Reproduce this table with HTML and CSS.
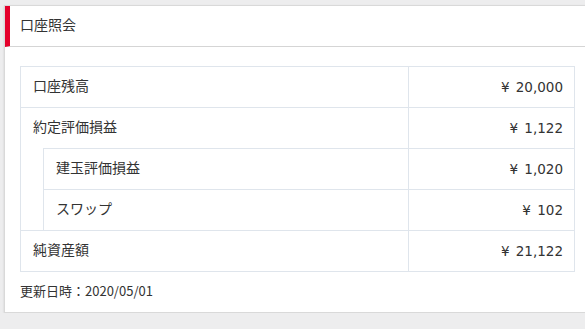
FILE: index.html
```html
<!DOCTYPE html>
<html lang="ja">
<head>
<meta charset="utf-8">
<link rel="stylesheet" href="styles.css">
</head>
<body>
<div class="card">
  <div class="card-head">口座照会</div>
  <div class="card-body">
    <div class="sheet">
      <div class="line">
        <div class="label">口座残高</div>
        <div class="value">¥ 20,000</div>
      </div>
      <div class="line">
        <div class="label">約定評価損益</div>
        <div class="value">¥ 1,122</div>
      </div>
      <div class="nested">
        <div class="line">
          <div class="label">建玉評価損益</div>
          <div class="value">¥ 1,020</div>
        </div>
        <div class="line">
          <div class="label">スワップ</div>
          <div class="value">¥ 102</div>
        </div>
      </div>
      <div class="line">
        <div class="label">純資産額</div>
        <div class="value">¥ 21,122</div>
      </div>
    </div>
    <div class="updated">更新日時：2020/05/01</div>
  </div>
</div>
</body>
</html>
```

FILE: styles.css
```css
* { box-sizing: border-box; }
html, body { margin: 0; padding: 0; }
body {
  background: #ededee;
  font-family: "Noto Sans CJK JP", "Noto Sans", sans-serif;
  color: #333;
  padding: 5px 0 0 4px;
  overflow: hidden;
}
.card {
  width: 582px;
  background: #fff;
  border: 1px solid #d9d9d9;
  box-shadow: 0 1px 2px rgba(0,0,0,0.12);
}
.card-head {
  height: 41px;
  border-left: 5px solid #e4002b;
  border-bottom: 1px solid #d5d5d5;
  padding: 0 0 4px 10px;
  font-size: 14px;
  line-height: 36px;
}
.card-body {
  padding: 19px 15px 10px 15px;
}
.sheet {
  width: 555px;
  border: 1px solid #dfe5ec;
}
.line {
  display: flex;
  height: 41px;
  border-top: 1px solid #dfe5ec;
}
.sheet > .line:first-child { height: 40px; border-top: 0; }
.nested {
  margin-left: 22px;
  border-left: 1px solid #dfe5ec;
}
.label {
  flex: 1;
  padding: 0 0 4px 12px;
  font-size: 14px;
  line-height: 36px;
}
.value {
  width: 166px;
  border-left: 1px solid #dfe5ec;
  text-align: right;
  padding-right: 11px;
  font-family: "DejaVu Sans", sans-serif;
  font-size: 13.5px;
  word-spacing: 2px;
  line-height: 40px;
}
.updated {
  margin-top: 9px;
  padding-bottom: 1px;
  font-size: 13px;
  line-height: 20px;
}
```
